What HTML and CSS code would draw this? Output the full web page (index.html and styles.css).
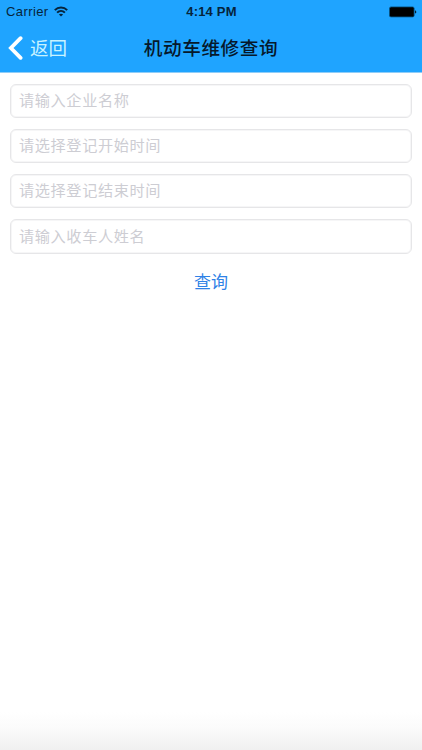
FILE: index.html
```
<!DOCTYPE html>
<html lang="zh-CN">
<head>
  <meta charset="UTF-8" />
  <meta name="viewport" content="width=device-width, initial-scale=1.0"/>
  <title>机动车维修查询</title>
  <link rel="stylesheet" href="styles.css">
</head>
<body>
  <header class="header">
    <div class="status">
      <div class="carrier">
        <span>Carrier</span>
        <svg class="wifi" width="14" height="11" viewBox="0 0 14 11" fill="none" stroke="#06243c" stroke-width="2">
          <path d="M0.8 4.1C4.3 0.5 9.7 0.5 13.2 4.1"/>
          <path d="M3.1 6.6C5.3 4.4 8.7 4.4 10.9 6.6"/>
          <path d="M7 10.6L4.9 8.5C6 7.4 8 7.4 9.1 8.5Z" fill="#06243c" stroke="none"/>
        </svg>
      </div>
      <span class="time">4:14 PM</span>
      <svg class="battery" width="28" height="12" viewBox="0 0 28 12">
        <rect x="0.5" y="0.9" width="24.6" height="10" rx="1.5" fill="#000" stroke="#07527f" stroke-width="0.8"/>
        <path d="M26 4.2C27.8 4.6 27.8 7.2 26 7.6Z" fill="#032035"/>
      </svg>
    </div>
    <nav class="nav">
      <a class="back" href="#">
        <svg width="15" height="24" viewBox="0 0 15 24" fill="none" stroke="#fff" stroke-width="3.8" stroke-linecap="round">
          <path d="M12.6 2.2L2.9 12L12.6 21.8"/>
        </svg>
        <span>返回</span>
      </a>
      <h1>机动车维修查询</h1>
    </nav>
  </header>

  <form class="form">
    <input type="text" placeholder="请输入企业名称">
    <input type="text" placeholder="请选择登记开始时间">
    <input type="text" placeholder="请选择登记结束时间">
    <input type="text" placeholder="请输入收车人姓名">
    <button type="button">查询</button>
  </form>
  <div class="shade"></div>
</body>
</html>
```
FILE: styles.css
```
* {
  box-sizing: border-box;
}
body {
  margin: 0;
  height: 750px;
  display: flex;
  flex-direction: column;
  background: #fff;
  font-family: "Liberation Sans", "Noto Sans CJK SC", sans-serif;
}
.header {
  height: 73px;
  background: #1fa4ff;
  border-bottom: 1px solid #8fcdf8;
}
.status {
  height: 23px;
  padding: 0 5px 0 6px;
  display: grid;
  grid-template-columns: 1fr auto 1fr;
  align-items: center;
  font-size: 13px;
  color: #06243c;
}
.carrier {
  display: flex;
  align-items: center;
  gap: 5px;
  letter-spacing: 0.4px;
}
.time {
  font-weight: bold;
  letter-spacing: 0.2px;
}
.battery {
  justify-self: end;
}
.nav {
  height: 49px;
  padding: 0 8px;
  display: grid;
  grid-template-columns: 1fr auto 1fr;
  align-items: center;
}
.back {
  display: flex;
  align-items: center;
  gap: 7px;
  color: #c9f3ff;
  font-size: 18.5px;
  text-decoration: none;
}
.back span {
  padding-bottom: 2px;
}
.nav h1 {
  margin: 0;
  padding-bottom: 3px;
  font-size: 18.6px;
  letter-spacing: 0.6px;
  font-weight: 500;
  color: #06182b;
}
.form {
  padding: 10.5px 10px 0;
  display: flex;
  flex-direction: column;
  gap: 11px;
}
.form input {
  height: 34.3px;
  padding: 0 8px 1px;
  border: 1px solid #e6e6e8;
  border-radius: 6px;
  box-shadow: inset 0 0 0 1px #f6f6f7;
  background: #fff;
  font-family: inherit;
  font-size: 15.2px;
  letter-spacing: 0.6px;
  outline: none;
}
.form input::placeholder {
  color: #cdcdd3;
}
.form button {
  align-self: center;
  margin-top: 5px;
  padding: 0;
  border: none;
  background: none;
  font-family: inherit;
  font-size: 17px;
  line-height: 26px;
  color: #2f82e6;
  cursor: pointer;
}
.shade {
  height: 38px;
  margin-top: auto;
  background: linear-gradient(#fff, #fbfbfb 40%, #f0f0f0);
}
```
